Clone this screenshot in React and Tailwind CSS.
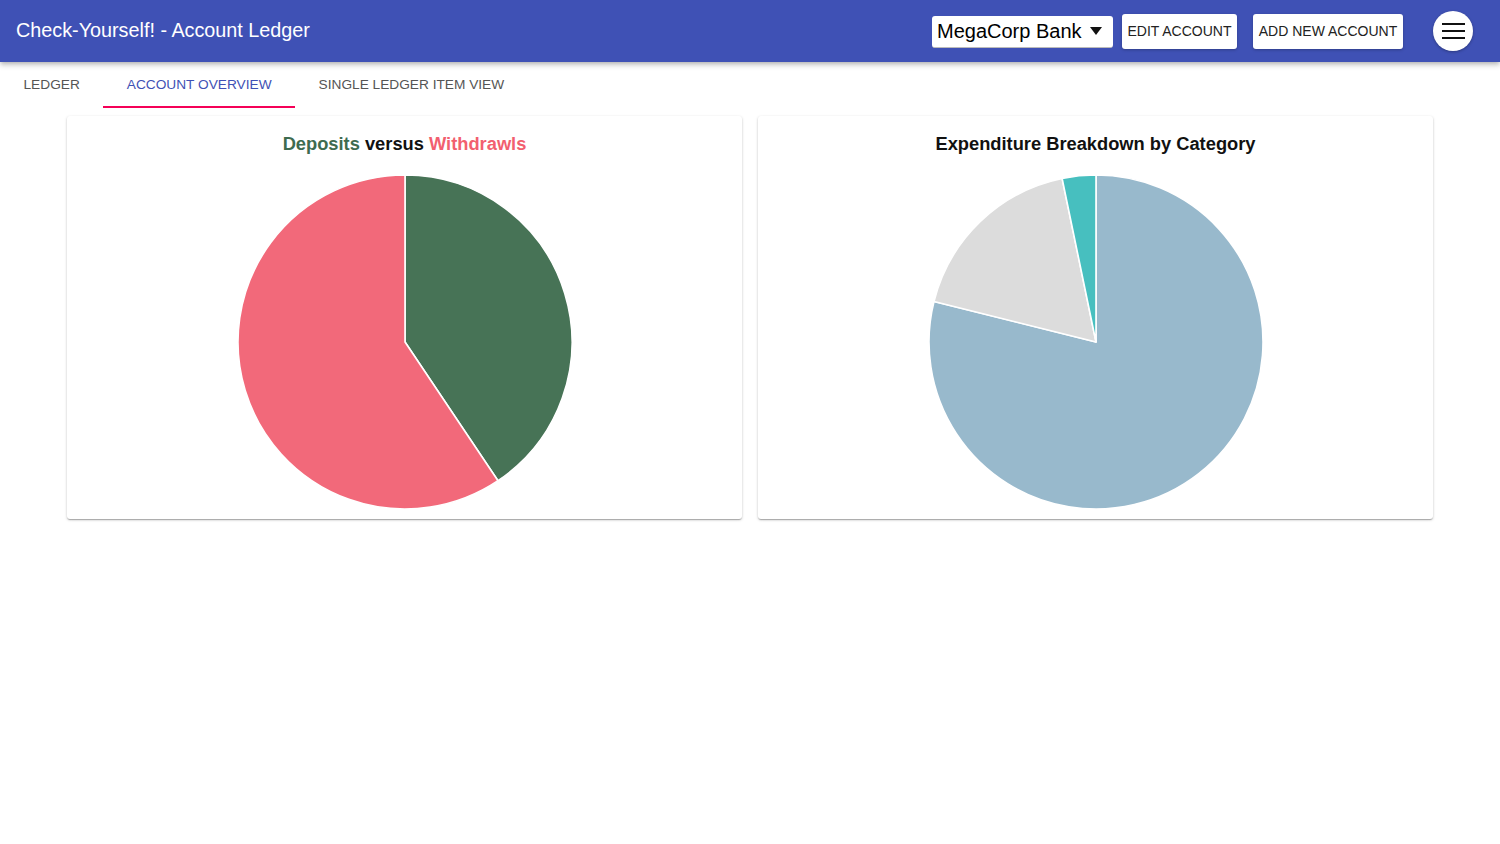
import React from 'react';

const font = { fontFamily: '"Liberation Sans", Arial, sans-serif' };

// build pie slice paths from fractions, starting at 12 o'clock, clockwise
const slicePaths = (values, r) => {
    const total = values.reduce((a, b) => a + b, 0);
    let start = 0;
    return values.map((v) => {
        const end = start + (v / total) * Math.PI * 2;
        const x1 = r + r * Math.sin(start);
        const y1 = r - r * Math.cos(start);
        const x2 = r + r * Math.sin(end);
        const y2 = r - r * Math.cos(end);
        const large = end - start > Math.PI ? 1 : 0;
        start = end;
        return `M${r},${r} L${x1},${y1} A${r},${r} 0 ${large} 1 ${x2},${y2} Z`;
    });
};

const Pie = ({ values, colors }) => {
    const r = 167;
    const paths = slicePaths(values, r);
    return (
        <svg width={r * 2 + 2} height={r * 2 + 2} viewBox={`-1 -1 ${r * 2 + 2} ${r * 2 + 2}`}>
            {paths.map((d, i) => (
                <path key={i} d={d} fill={colors[i]} stroke="#ffffff" strokeWidth="1.6" strokeLinejoin="round" />
            ))}
        </svg>
    );
};

const Card = ({ title, children }) => (
    <div className="flex-1 bg-white rounded-[3px] shadow-[0_1px_3px_rgba(0,0,0,0.2),0_1px_1px_rgba(0,0,0,0.14),0_2px_1px_-1px_rgba(0,0,0,0.12)] flex flex-col items-center pt-[17px] pb-[9px]">
        <div className="text-[18.3px] font-bold leading-[22px] text-[#111]">{title}</div>
        <div className="mt-[19px]">{children}</div>
    </div>
);

const tabs = ['LEDGER', 'ACCOUNT OVERVIEW', 'SINGLE LEDGER ITEM VIEW'];

export default function App() {
    return (
        <div className="min-h-screen bg-white" style={font}>
            <header className="h-[62px] bg-[#3f51b5] flex items-center justify-between pl-4 pr-[27px] shadow-[0_2px_4px_-1px_rgba(0,0,0,0.2),0_4px_5px_0_rgba(0,0,0,0.14)] relative z-10">
                <h1 className="text-white text-[19.8px] leading-none">Check-Yourself! - Account Ledger</h1>
                <div className="flex items-center">
                    <div className="w-[181px] h-[32px] bg-white rounded-[3px] flex items-center justify-between pl-[5px] pr-[11px] border-b border-[#bbb] mt-[1px]">
                        <span className="text-[20px] text-black">MegaCorp Bank</span>
                        <svg width="12" height="8" viewBox="0 0 12 8"><path d="M0 0 L12 0 L6 8 Z" fill="#111" /></svg>
                    </div>
                    <button className="ml-[9px] h-[35px] w-[115px] bg-white rounded-[3px] text-[14px] text-[#222] shadow-[0_1px_3px_rgba(0,0,0,0.25)]">EDIT ACCOUNT</button>
                    <button className="ml-[16px] h-[35px] w-[150px] bg-white rounded-[3px] text-[14px] text-[#222] shadow-[0_1px_3px_rgba(0,0,0,0.25)]">ADD NEW ACCOUNT</button>
                    <button className="ml-[30px] w-[40px] h-[40px] rounded-full bg-white flex flex-col items-center justify-center gap-[5px] shadow-[0_1px_3px_rgba(0,0,0,0.3)]">
                        <span className="block w-[23px] h-[2px] bg-[#111]" />
                        <span className="block w-[23px] h-[2px] bg-[#111]" />
                        <span className="block w-[23px] h-[2px] bg-[#111]" />
                    </button>
                </div>
            </header>

            <nav className="flex h-[46px]">
                {tabs.map((t, i) => (
                    <div
                        key={t}
                        className={`px-[23.5px] pt-[2px] flex items-center text-[13.7px] border-b-2 ${
                            i === 1 ? 'text-[#3f51b5] border-[#f50057]' : 'text-[#555] border-transparent'
                        }`}
                    >
                        {t}
                    </div>
                ))}
            </nav>

            <main className="flex gap-4 px-[67px] mt-[8px]">
                <Card
                    title={
                        <>
                            <span className="text-[#3e6b4f]">Deposits</span> versus{' '}
                            <span className="text-[#f25f6f]">Withdrawls</span>
                        </>
                    }
                >
                    <Pie values={[40.6, 59.4]} colors={['#477356', '#f2697a']} />
                </Card>
                <Card title="Expenditure Breakdown by Category">
                    <Pie values={[78.9, 17.85, 3.25]} colors={['#98b9cc', '#dcdcdc', '#47bfbf']} />
                </Card>
            </main>
        </div>
    );
}
